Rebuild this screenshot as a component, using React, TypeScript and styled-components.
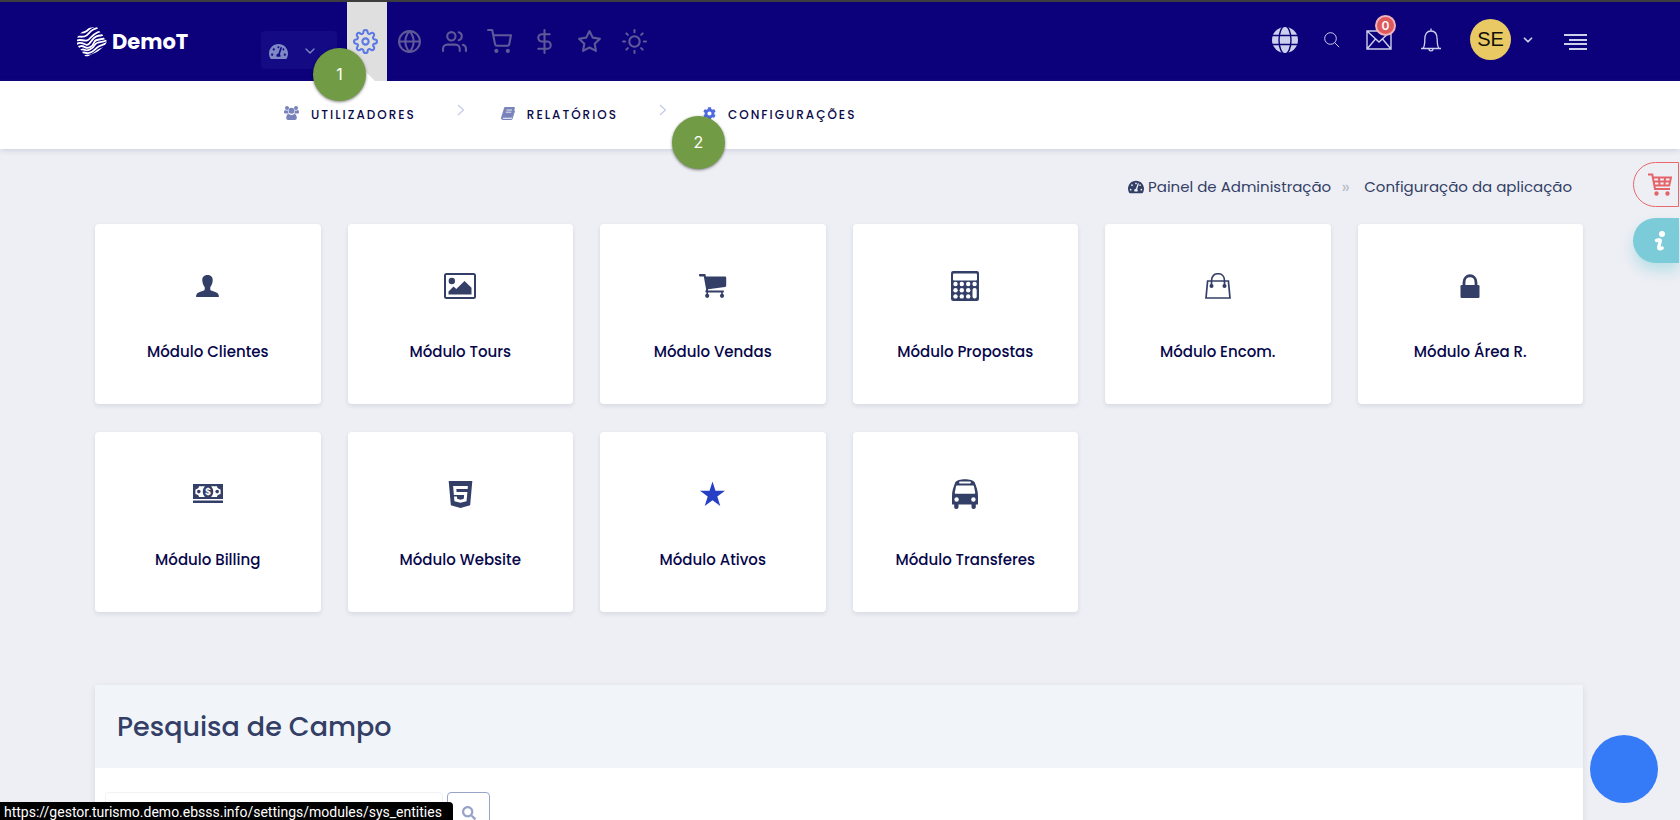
import React from 'react';
import styled, { createGlobalStyle } from 'styled-components';
import { FiSettings, FiGlobe, FiUsers, FiShoppingCart, FiDollarSign, FiStar, FiSun, FiChevronDown } from 'react-icons/fi';
import { FaTachometerAlt, FaCog, FaSearch } from 'react-icons/fa';
import { SiHtml5 } from 'react-icons/si';

const GlobalStyle = createGlobalStyle`
  *, *::before, *::after { box-sizing: border-box; }
  body {
    margin: 0;
    background: #eeeff4;
    color: #343f67;
    font-family: Poppins, Inter, "Open Sans", sans-serif;
  }
  a { color: inherit; text-decoration: none; }
  button, input { font: inherit; }
  svg { display: block; flex: none; }
`;

const Page = styled.div`
  min-height: 100vh;
`;

const Header = styled.header`
  display: flex;
  align-items: stretch;
  height: 81px;
  padding: 0 93px 0 77px;
  border-top: 2px solid #3c3b3e;
  background: #0c007b;
`;

const Brand = styled.a`
  display: flex;
  align-items: center;
  gap: 5px;
  width: 184px;
  color: #fff;
  font-size: 21px;
  font-weight: 700;
  line-height: 28px;
`;

const MainNav = styled.nav`
  display: flex;
  align-items: stretch;
`;

const DashboardButton = styled.button`
  display: flex;
  align-items: center;
  gap: 14px;
  width: 76px;
  height: 38px;
  margin: 29px 10px 0 0;
  padding: 2px 8px 0;
  border: 0;
  border-radius: 4px;
  background: #140a84;
  color: #7e88c4;
`;

const NavLink = styled.a<{ $active?: boolean }>`
  position: relative;
  display: flex;
  align-items: center;
  justify-content: center;
  width: ${(p) => (p.$active ? 40 : 45)}px;
  padding-right: ${(p) => (p.$active ? 4 : 1)}px;
  background: ${(p) => (p.$active ? '#dfdfdf' : 'transparent')};
  color: ${(p) => (p.$active ? '#5b78e4' : '#5f5899')};
  font-size: 25px;
`;

const Notch = styled.span`
  position: absolute;
  bottom: 0;
  left: 8px;
  border: 10px solid transparent;
  border-top: 0;
  border-bottom-color: #fff;
`;

const Tools = styled.div`
  display: flex;
  align-items: center;
  margin-left: auto;
  padding-bottom: 4px;
  color: #cdd0ea;
`;

const ToolButton = styled.button<{ $gap: number }>`
  position: relative;
  display: flex;
  align-items: center;
  margin: 0 ${(p) => p.$gap}px 0 0;
  padding: 0;
  border: 0;
  background: none;
  color: inherit;
`;

const Badge = styled.span`
  position: absolute;
  top: -15px;
  left: 9px;
  width: 21px;
  height: 21px;
  border: 2px solid #f0b3bd;
  border-radius: 50%;
  background: #df595c;
  color: #fff;
  font-family: Inter, sans-serif;
  font-size: 12px;
  font-weight: 600;
  line-height: 17px;
  text-align: center;
`;

const Avatar = styled.span`
  width: 41px;
  height: 41px;
  margin-right: 10px;
  border-radius: 50%;
  background: #e9c963;
  color: #11110c;
  font-family: "Liberation Sans", Arial, sans-serif;
  font-size: 20px;
  line-height: 41px;
  text-align: center;
`;

const SubNav = styled.nav`
  display: flex;
  height: 68px;
  padding: 0 284px;
  background: #fff;
  box-shadow: 0 1px 6px rgba(60, 60, 130, 0.2);
  color: #7783ba;
`;

const SubLink = styled.a<{ $active?: boolean }>`
  display: flex;
  align-items: center;
  gap: 12px;
  height: 64px;
  color: ${(p) => (p.$active ? '#506be0' : 'inherit')};
`;

const SubLabel = styled.span`
  padding-top: 4px;
  color: #0a0a4a;
  font-size: 12px;
  font-weight: 500;
  letter-spacing: 2px;
  line-height: 16px;
`;

const Separator = styled.span`
  display: flex;
  align-items: center;
  width: 85px;
  height: 58px;
  padding-left: 41px;
  color: #c3cbe8;
`;

const Content = styled.main`
  padding: 0 97px 0 95px;
`;

const Breadcrumb = styled.nav`
  display: flex;
  align-items: center;
  justify-content: flex-end;
  height: 75px;
  padding-right: 11px;
  font-size: 15px;
  line-height: 24px;

  a { display: flex; align-items: center; gap: 4px; }
  > span {
    width: 33px;
    padding-right: 4px;
    color: #b9bcc8;
    font-size: 18px;
    text-align: center;
  }
`;

const Grid = styled.div`
  display: grid;
  grid-template-columns: repeat(6, 1fr);
  gap: 28px 27px;
`;

const Card = styled.a`
  display: flex;
  flex-direction: column;
  align-items: center;
  height: 180px;
  padding-top: 42px;
  border-radius: 4px;
  background: #fff;
  box-shadow: 0 2px 4px rgba(60, 60, 100, 0.12);
`;

const CardIcon = styled.span<{ $accent?: boolean }>`
  display: flex;
  align-items: center;
  height: 40px;
  color: ${(p) => (p.$accent ? '#2540c4' : '#343f67')};
`;

const CardTitle = styled.span`
  margin-top: 34px;
  color: #06064a;
  font-size: 15px;
  font-weight: 500;
  line-height: 24px;
`;

const Panel = styled.section`
  margin-top: 73px;
  background: #fff;
  box-shadow: 0 2px 6px rgba(60, 60, 100, 0.12);
`;

const PanelHeader = styled.h2`
  display: flex;
  align-items: center;
  height: 83px;
  margin: 0;
  padding: 0 22px;
  background: #f1f5fa;
  font-size: 27px;
  font-weight: 500;
  line-height: 36px;
`;

const SearchForm = styled.form`
  display: flex;
  align-items: flex-start;
  gap: 4px;
  padding: 24px 10px;
`;

const SearchInput = styled.input`
  width: 338px;
  height: 38px;
  border: 1px solid #f1f2f6;
  border-radius: 4px;
  background: #fff;
`;

const SearchButton = styled.button`
  display: flex;
  justify-content: center;
  width: 43px;
  height: 40px;
  padding: 13px 0 0;
  border: 1px solid #98a3ca;
  border-radius: 4px;
  background: #fff;
  color: #98a3ca;
  font-size: 14px;
`;

const SideTabs = styled.aside`
  position: fixed;
  top: 162px;
  right: 1px;
  display: flex;
  flex-direction: column;
  gap: 11px;
`;

const SideTab = styled.button<{ $filled?: boolean }>`
  display: flex;
  align-items: center;
  justify-content: center;
  width: 46px;
  height: 45px;
  padding: 0 0 0 8px;
  border: ${(p) => (p.$filled ? '0' : '1px solid #e8686d')};
  border-radius: 23px 0 0 23px;
  background: ${(p) => (p.$filled ? '#7bcbd9' : 'transparent')};
  box-shadow: ${(p) => (p.$filled ? '0 8px 14px rgba(123, 203, 217, 0.45)' : 'none')};
  color: ${(p) => (p.$filled ? '#fff' : '#e3656a')};
`;

const Marker = styled.span<{ $x: number; $y: number }>`
  position: absolute;
  top: ${(p) => p.$y}px;
  left: ${(p) => p.$x}px;
  width: 53px;
  height: 53px;
  border-radius: 50%;
  background: #729b45;
  box-shadow: 0 1px 3px rgba(0, 0, 0, 0.5);
  color: #fff;
  font-family: Inter, sans-serif;
  font-size: 16px;
  line-height: 53px;
  text-align: center;
`;

const ChatButton = styled.button`
  position: fixed;
  right: 22px;
  bottom: 17px;
  width: 68px;
  height: 68px;
  border: 0;
  border-radius: 50%;
  background: #357af6;
`;

const StatusBar = styled.div`
  position: fixed;
  bottom: 0;
  left: 0;
  padding: 3px 11px 0 4px;
  border-radius: 0 4px 0 0;
  background: #000;
  color: #fff;
  font-family: Roboto, sans-serif;
  font-size: 14px;
  line-height: 15px;
`;

const Logo = () => (
  <svg width="30" height="30" viewBox="0 0 30 30" fill="none" stroke="#fff" strokeWidth="1.8">
    <clipPath id="mark">
      <path d="M4 6C8 2 12 0 20 0l2 4c3 2 4 4 5 7l3 3c-1 3-2 5-5 7-3 3-6 5-10 6l-5 3c-3-1-4-4-6-7-3-3-5-6-4-10 0-3 1-5 4-7z" />
    </clipPath>
    <g clipPath="url(#mark)">
      <g transform="rotate(-18 15 15)">
        <path d="M-2 2c5-3 10 3 15 1s6-3 13-2" />
        <path d="M-3 6c6-3 10 3 15 1s6-5 18-3" />
        <path d="M-3 10c6-4 10 2 14 2s7-7 21-4" />
        <path d="M-3 14c6-5 9 0 12 2s7-5 12-5 6 2 11 0" />
        <path d="M-3 18c5-5 8-2 10 0s7 2 10-2 6 1 15-1" />
        <path d="M-3 21.500c5-4 7-3 9-1s8 1 11-2 7 1 15-1" />
        <path d="M-3 25c5-4 7-3 10-1s7 0 11-2 6 0 13-2" />
        <path d="M0 28c4-3 6-2 8-1s7-1 10-2 6 0 10-1" />
        <path d="M2 31c3-1 5-1 8-1s6-1 9-2 6 0 8-1" />
      </g>
    </g>
  </svg>
);

const WireGlobe = () => (
  <svg width="26" height="26" viewBox="0 0 26 26">
    <circle cx="13" cy="13" r="13" fill="currentColor" />
    <g fill="none" stroke="#0c007b" strokeWidth="1.400">
      <ellipse cx="13" cy="13" rx="6" ry="14" />
      <path d="M0 8.500h26M0 17.500h26" />
    </g>
  </svg>
);

const ThinSearch = () => (
  <svg width="16" height="16" viewBox="0 0 16 16" fill="none" stroke="currentColor" strokeWidth="1">
    <circle cx="6.500" cy="6.500" r="5.800" />
    <path d="M10.600 10.600l4.600 4.600" />
  </svg>
);

const Mail = () => (
  <svg width="26" height="20" viewBox="0 0 26 20" fill="none" stroke="currentColor" strokeWidth="1.400">
    <path d="M1 1h24v18H1zM1 1l12 11L25 1M1 19l8.500-10M25 19L16.500 9" />
  </svg>
);

const Bell = () => (
  <svg width="22" height="24" viewBox="0 0 22 24" fill="none" stroke="currentColor" strokeWidth="1.300">
    <path d="M1 20.500h20M3 20.500c1.500-2 1.800-4 1.800-9C4.800 6 7 3 11 3s6.200 3 6.200 8.500c0 5 .3 7 1.800 9M11 3V.5M9 21c0 2.500 4 2.500 4 0" />
  </svg>
);

const MenuLines = () => (
  <svg width="23" height="23" viewBox="0 0 23 23" fill="currentColor">
    <path d="M0 6h23v2H0zM5 11h18v2H5zM0 15h23v2H0zM5 20h18v2H5z" />
  </svg>
);

const Group = () => (
  <svg width="15" height="14" viewBox="0 0 15 14" fill="currentColor">
    <circle cx="3" cy="2" r="2" />
    <circle cx="12" cy="2" r="2" />
    <circle cx="7.500" cy="4.700" r="3" />
    <path d="M3.900 4.500c0 1.200.4 2.200 1.100 3H1.500C.5 7.500 0 7 0 6.200 0 4.800.6 4 1.300 4c.6.500 1.600.8 2.600.5zM11.100 4.500c0 1.200-.4 2.200-1.100 3h3.500c1 0 1.500-.5 1.500-1.300C15 4.800 14.400 4 13.700 4c-.6.500-1.600.8-2.600.500zM4.700 8c1.600 1.200 4 1.200 5.600 0 1.700 0 2.500 1.800 2.500 4 0 1.200-.8 2-2 2H4.200c-1.200 0-2-.8-2-2 0-2.200.8-4 2.500-4z" />
  </svg>
);

const Book = () => (
  <svg width="14" height="13" viewBox="0 0 14 13">
    <path fill="currentColor" d="M4.400 0h8.400c.8 0 1.200.6 1 1.300l-2.500 8.400c-.2.700-.7 1-1.400 1H2.200c-.6 0-.7 1 .1 1h8l.6-.5 2.400-8 .5.400c.2.300.2.600.1.900l-2.300 7.300c-.2.700-.8 1.200-1.500 1.200H2C.6 13-.3 11.700.1 10.500L3 1.200C3.200.5 3.700 0 4.400 0z" />
    <path stroke="#fff" strokeWidth=".8" d="M5.500 3h5.500M4.800 5.200h5.500" />
  </svg>
);

const Arrow = () => (
  <svg width="8" height="12" viewBox="0 0 8 12" fill="none" stroke="currentColor" strokeWidth="1.200">
    <path d="M1 1l5.500 5L1 11" />
  </svg>
);

const Person = () => (
  <svg width="23" height="24" viewBox="0 0 24 24" fill="currentColor">
    <path d="M12 .500c4 0 5.800 2.500 5.400 6.200-.3 3-1.600 5-2.500 6.500v2.300c0 1.200 1 1.500 3 2.100 4.500 1.300 6 2.600 6 5.900H.1c0-3.300 1.500-4.600 6-5.900 2-.6 3-.9 3-2.100v-2.300c-.9-1.500-2.200-3.500-2.500-6.500C6.200 3 8 .5 12 .5z" />
  </svg>
);

const Picture = () => (
  <svg width="32" height="26" viewBox="0 0 32 26" fill="currentColor">
    <rect x="1" y="1" width="30" height="24" rx="1.500" fill="none" stroke="currentColor" strokeWidth="2" />
    <circle cx="7.800" cy="8" r="3.200" />
    <path d="M4.500 18.500l5-5 2.800 2.500L20.500 8l7 6.800v6.700h-23z" />
  </svg>
);

const SolidCart = () => (
  <svg width="28" height="24" viewBox="0 0 28 24" fill="currentColor">
    <path d="M.7 0h4.800c.8 0 1 .4 1.100 1l.3 1.500h19c.9 0 1.300.4 1.300 1.200v8c0 .7-.4 1.100-1.200 1.300L9 15.200v1.300h15.200c1 0 1 1.900 0 1.900H7.200c-1 0-1.200-1.200-.4-1.800l.3-1.400L4.800 2.400H.7C-.2 2.400-.2 0 .7 0z" />
    <circle cx="8.200" cy="21.800" r="2.100" />
    <circle cx="23" cy="21.800" r="2.100" />
    <path d="M7.400 17h1.600v4H7.400zM22.200 17h1.600v4h-1.600z" />
  </svg>
);

const Calculator = () => (
  <svg width="28" height="30" viewBox="0 0 28 30">
    <rect width="28" height="30" rx="2.200" fill="currentColor" />
    <rect x="2" y="2.500" width="24" height="7" rx="1" fill="#fff" />
    {[13, 19.2, 25.400].map((y) =>
      [4.500, 10.800, 17.200, 23.600].map((x) =>
        x > 20 && y > 14 ? null : <circle key={`${x}-${y}`} cx={x} cy={y} r="2.200" fill="#fff" />,
      ),
    )}
    <rect x="21.500" y="17" width="4.200" height="10.600" rx="2" fill="#fff" />
  </svg>
);

const Bag = () => (
  <svg width="26" height="26" viewBox="0 0 26 26" fill="none" stroke="currentColor" strokeWidth="1.700">
    <path d="M2.600 8h20.800L25 25H1zM6.500 13V7.500c0-9 13-9 13 0V13" />
    <circle cx="6.500" cy="13" r="1.200" fill="currentColor" />
    <circle cx="19.500" cy="13" r="1.200" fill="currentColor" />
  </svg>
);

const Lock = () => (
  <svg width="20" height="24" viewBox="0 0 20 24">
    <rect x=".5" y="11" width="19" height="13" rx="1.300" fill="currentColor" />
    <path d="M4 12V8.500c0-9 12-9 12 0V12" fill="none" stroke="currentColor" strokeWidth="2.800" />
  </svg>
);

const Money = () => (
  <svg width="30" height="20" viewBox="0 0 30 20">
    <path fill="currentColor" d="M0 0h30v15H0zM0 16.500h30V19H0z" />
    <path fill="#fff" d="M6 2.300h6C9 5.500 9 10 12 13H6c0-1.800-1.500-2.600-3.600-3V5.500C4.500 5 6 4 6 2.300zM24 2.300h-6c3 3.200 3 7.700 0 10.700h6c0-1.800 1.500-2.600 3.600-3V5.500C25.500 5 24 4 24 2.300z" />
    <circle cx="5.800" cy="7.600" r="1.800" fill="currentColor" />
    <circle cx="24.200" cy="7.600" r="1.800" fill="currentColor" />
    <text x="15" y="11" fill="#fff" textAnchor="middle" fontFamily="Inter, sans-serif" fontSize="9" fontWeight="700">$</text>
  </svg>
);

const Star = () => (
  <svg width="25" height="26" viewBox="0 0 26 26" fill="currentColor">
    <path d="M13 0l3.100 9.700H26l-8 6 3.100 9.900L13 19.500l-8.100 6.100L8 15.700l-8-6h9.900z" />
  </svg>
);

const Bus = () => (
  <svg width="26" height="30" viewBox="0 0 26 30">
    <path fill="currentColor" d="M3.300 3.300C5.500-.9 20.500-.9 22.700 3.300 24.500 8 26 12 26 17v8.500h-2.200V28c0 2.700-4.300 2.700-4.300 0v-2.500h-13V28c0 2.700-4.300 2.700-4.300 0v-2.500H0V17c0-5 1.500-9 3.300-13.700z" />
    <path fill="#fff" d="M8 2.500h10c1.200 0 1.200 2 0 2H8c-1.200 0-1.200-2 0-2zM5.200 6.500h15.600c.8 0 1 .3 1.200 1l1.200 6c.1.800-.2 1.300-1 1.300H3.800c-.8 0-1.100-.5-1-1.300l1.200-6c.2-.7.400-1 1.200-1z" />
    <circle cx="4.600" cy="20.500" r="2.200" fill="#fff" />
    <circle cx="21.400" cy="20.500" r="2.200" fill="#fff" />
  </svg>
);

const GridCart = () => (
  <svg width="24" height="23" viewBox="0 0 24 23" fill="none" stroke="currentColor" strokeWidth="2">
    <path d="M0 1.500h4.300L7 16h15M5 4.500h18l-1.800 8H6.300M5.500 8.500h16.500M11 4.500l.5 8M17 4.500l-.5 8" />
    <circle cx="8.500" cy="20.500" r="1.200" fill="currentColor" />
    <circle cx="19.500" cy="20.500" r="1.200" fill="currentColor" />
  </svg>
);

const Info = () => (
  <svg width="12" height="20" viewBox="0 0 12 20" fill="none" stroke="currentColor">
    <circle cx="8" cy="3" r="3" fill="currentColor" stroke="none" />
    <path d="M2.500 9.500c1-.7 4-1.200 3.800.3L4.800 16c-.4 2.200 1.600 2.200 3.400 1" strokeWidth="3.400" strokeLinejoin="round" strokeLinecap="round" />
  </svg>
);

const navItems = [
  { label: 'Website', icon: <FiGlobe /> },
  { label: 'Clientes', icon: <FiUsers /> },
  { label: 'Vendas', icon: <FiShoppingCart /> },
  { label: 'Billing', icon: <FiDollarSign /> },
  { label: 'Ativos', icon: <FiStar /> },
  { label: 'Tours', icon: <FiSun /> },
];

const modules = [
  { title: 'Módulo Clientes', icon: <Person /> },
  { title: 'Módulo Tours', icon: <Picture /> },
  { title: 'Módulo Vendas', icon: <SolidCart /> },
  { title: 'Módulo Propostas', icon: <Calculator /> },
  { title: 'Módulo Encom.', icon: <Bag /> },
  { title: 'Módulo Área R.', icon: <Lock /> },
  { title: 'Módulo Billing', icon: <Money /> },
  { title: 'Módulo Website', icon: <SiHtml5 size={27} /> },
  { title: 'Módulo Ativos', icon: <Star />, accent: true },
  { title: 'Módulo Transferes', icon: <Bus /> },
];

export default function App() {
  return (
    <Page>
      <GlobalStyle />
      <Header>
        <Brand href="#"><Logo />DemoT</Brand>
        <MainNav aria-label="Principal">
          <DashboardButton aria-label="Painel">
            <FaTachometerAlt size={19} />
            <FiChevronDown size={16} />
          </DashboardButton>
          <NavLink href="#" $active aria-label="Definições"><FiSettings /><Notch /></NavLink>
          {navItems.map((item) => (
            <NavLink key={item.label} href="#" aria-label={item.label}>{item.icon}</NavLink>
          ))}
        </MainNav>
        <Tools>
          <ToolButton $gap={26} aria-label="Idioma"><WireGlobe /></ToolButton>
          <ToolButton $gap={26} aria-label="Pesquisar"><ThinSearch /></ToolButton>
          <ToolButton $gap={28} aria-label="Mensagens"><Mail /><Badge>0</Badge></ToolButton>
          <ToolButton $gap={28} aria-label="Notificações"><Bell /></ToolButton>
          <ToolButton $gap={29} aria-label="Conta"><Avatar>SE</Avatar><FiChevronDown size={14} strokeWidth={3} /></ToolButton>
          <ToolButton $gap={0} aria-label="Menu"><MenuLines /></ToolButton>
        </Tools>
      </Header>
      <SubNav aria-label="Secções">
        <SubLink href="#"><Group /><SubLabel>UTILIZADORES</SubLabel></SubLink>
        <Separator><Arrow /></Separator>
        <SubLink href="#"><Book /><SubLabel>RELATÓRIOS</SubLabel></SubLink>
        <Separator><Arrow /></Separator>
        <SubLink href="#" $active><FaCog size={13} /><SubLabel>CONFIGURAÇÕES</SubLabel></SubLink>
      </SubNav>
      <Content>
        <Breadcrumb aria-label="Localização">
          <a href="#"><FaTachometerAlt size={16} />Painel de Administração</a>
          <span>»</span>
          <a href="#">Configuração da aplicação</a>
        </Breadcrumb>
        <Grid>
          {modules.map((m) => (
            <Card key={m.title} href="#">
              <CardIcon $accent={m.accent}>{m.icon}</CardIcon>
              <CardTitle>{m.title}</CardTitle>
            </Card>
          ))}
        </Grid>
        <Panel>
          <PanelHeader>Pesquisa de Campo</PanelHeader>
          <SearchForm>
            <SearchInput type="search" aria-label="Pesquisa de Campo" />
            <SearchButton type="button" aria-label="Pesquisar"><FaSearch /></SearchButton>
          </SearchForm>
        </Panel>
      </Content>
      <SideTabs>
        <SideTab aria-label="Carrinho"><GridCart /></SideTab>
        <SideTab $filled aria-label="Informação"><Info /></SideTab>
      </SideTabs>
      <Marker $x={313} $y={48}>1</Marker>
      <Marker $x={672} $y={116}>2</Marker>
      <ChatButton aria-label="Conversa" />
      <StatusBar>https://gestor.turismo.demo.ebsss.info/settings/modules/sys_entities</StatusBar>
    </Page>
  );
}
